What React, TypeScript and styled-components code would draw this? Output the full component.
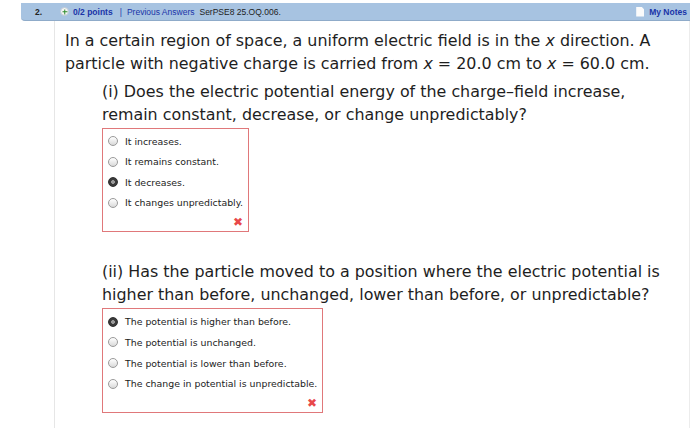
import React from "react";
import styled, { createGlobalStyle } from "styled-components";

const Global = createGlobalStyle`
    html, body {
        margin: 0;
        padding: 0;
        background: #ffffff;
    }
`;

const Page = styled.div`
    width: 700px;
    height: 428px;
    overflow: hidden;
    padding-top: 3px;
    box-sizing: border-box;
`;

const HeaderBar = styled.div`
    margin-left: 21px;
    width: 669px;
    height: 18px;
    background: #a7c3e1;
    border-bottom: 1px solid #8fabc9;
    border-radius: 0 0 0 4px;
    display: flex;
    align-items: center;
    font-family: "Liberation Sans", Arial, sans-serif;
    font-size: 8.5px;
    box-sizing: border-box;
    padding: 0 3px 0 14px;
`;

const Num = styled.span`
    font-weight: bold;
    color: #222;
    width: 25px;
`;

const PlusIcon = styled.span`
    width: 7px;
    height: 7px;
    border-radius: 50%;
    background: #f4f4f4;
    border: 1px solid #bcc8d4;
    margin-right: 4px;
    position: relative;
    &::before,
    &::after {
        content: "";
        position: absolute;
        background: #2d8a2d;
        left: 50%;
        top: 50%;
        transform: translate(-50%, -50%);
    }
    &::before {
        width: 5px;
        height: 1.5px;
    }
    &::after {
        width: 1.5px;
        height: 5px;
    }
`;

const Points = styled.span`
    font-weight: bold;
    color: #1a34a8;
`;

const Sep = styled.span`
    color: #1a34a8;
    margin: 0 5px 0 7px;
`;

const LinkText = styled.span<{ $bold?: boolean }>`
    color: #1a34a8;
    font-weight: ${(p) => (p.$bold ? "bold" : "normal")};
`;

const Code = styled.span`
    color: #222;
    margin-left: 5px;
`;

const Spacer = styled.div`
    flex: 1;
`;

const NoteIcon = styled.span`
    width: 8px;
    height: 10px;
    background: #fbfbfb;
    margin-right: 5px;
    clip-path: polygon(0 0, 65% 0, 100% 30%, 100% 100%, 0 100%);
`;

const Body = styled.div`
    margin-left: 54px;
    width: 636px;
    height: 410px;
    border-left: 1px solid #e6e6e6;
    border-right: 1px solid #ececec;
    box-sizing: border-box;
    padding: 9px 0 0 10px;
    font-family: "DejaVu Sans", Verdana, sans-serif;
    color: #1e1e1e;
`;

const Para = styled.p`
    margin: 0;
    font-size: 15.9px;
    line-height: 22.7px;
    white-space: nowrap;
`;

const Part = styled.div<{ $top: number }>`
    margin-left: 37px;
    margin-top: ${(p) => p.$top}px;
`;

const AnswerBox = styled.div<{ $width: number; $lead: number }>`
    width: ${(p) => p.$width}px;
    margin-top: 1px;
    border: 1px solid #e0787a;
    box-sizing: border-box;
    padding: ${(p) => p.$lead}px 0 0 5px;
    display: flex;
    flex-direction: column;
`;

const Option = styled.div`
    height: 20.6px;
    display: flex;
    align-items: center;
    font-size: 9.4px;
    color: #1c1c1c;
`;

const Radio = styled.span<{ $on?: boolean }>`
    width: 10px;
    height: 10px;
    border-radius: 50%;
    margin-right: 7px;
    box-sizing: border-box;
    flex: none;
    border: 1px solid #9a9a9a;
    background: ${(p) =>
        p.$on
            ? "radial-gradient(circle, #9a9a9a 0 1.6px, #3a3a3a 2.2px)"
            : "linear-gradient(#ffffff, #d9d9d9)"};
    border-color: ${(p) => (p.$on ? "#2f2f2f" : "#9a9a9a")};
`;

const Mark = styled.div`
    align-self: flex-end;
    color: #e8484a;
    font-family: "DejaVu Sans", sans-serif;
    font-weight: bold;
    font-size: 12px;
    line-height: 18px;
    margin-right: 5px;
`;

const X = styled.i`
    font-style: italic;
`;

const partOne = [
    "It increases.",
    "It remains constant.",
    "It decreases.",
    "It changes unpredictably.",
];

const partTwo = [
    "The potential is higher than before.",
    "The potential is unchanged.",
    "The potential is lower than before.",
    "The change in potential is unpredictable.",
];

function Choices({
    items,
    picked,
    width,
    lead,
}: {
    items: string[];
    picked: number;
    width: number;
    lead: number;
}) {
    return (
        <AnswerBox $width={width} $lead={lead}>
            {items.map((t, i) => (
                <Option key={t}>
                    <Radio $on={i === picked} />
                    {t}
                </Option>
            ))}
            <Mark>✖</Mark>
        </AnswerBox>
    );
}

export default function App() {
    return (
        <Page>
            <Global />
            <HeaderBar>
                <Num>2.</Num>
                <PlusIcon />
                <Points>0/2 points</Points>
                <Sep>|</Sep>
                <LinkText>Previous Answers</LinkText>
                <Code>SerPSE8 25.OQ.006.</Code>
                <Spacer />
                <NoteIcon />
                <LinkText $bold>My Notes</LinkText>
            </HeaderBar>
            <Body>
                <Para>
                    In a certain region of space, a uniform electric field is in the <X>x</X> direction. A
                    <br />
                    particle with negative charge is carried from <X>x</X> = 20.0 cm to <X>x</X> = 60.0 cm.
                </Para>
                <Part $top={6}>
                    <Para>
                        (i) Does the electric potential energy of the charge–field increase,
                        <br />
                        remain constant, decrease, or change unpredictably?
                    </Para>
                    <Choices items={partOne} picked={2} width={147} lead={2} />
                </Part>
                <Part $top={29}>
                    <Para>
                        (ii) Has the particle moved to a position where the electric potential is
                        <br />
                        higher than before, unchanged, lower than before, or unpredictable?
                    </Para>
                    <Choices items={partTwo} picked={0} width={221} lead={3} />
                </Part>
            </Body>
        </Page>
    );
}
